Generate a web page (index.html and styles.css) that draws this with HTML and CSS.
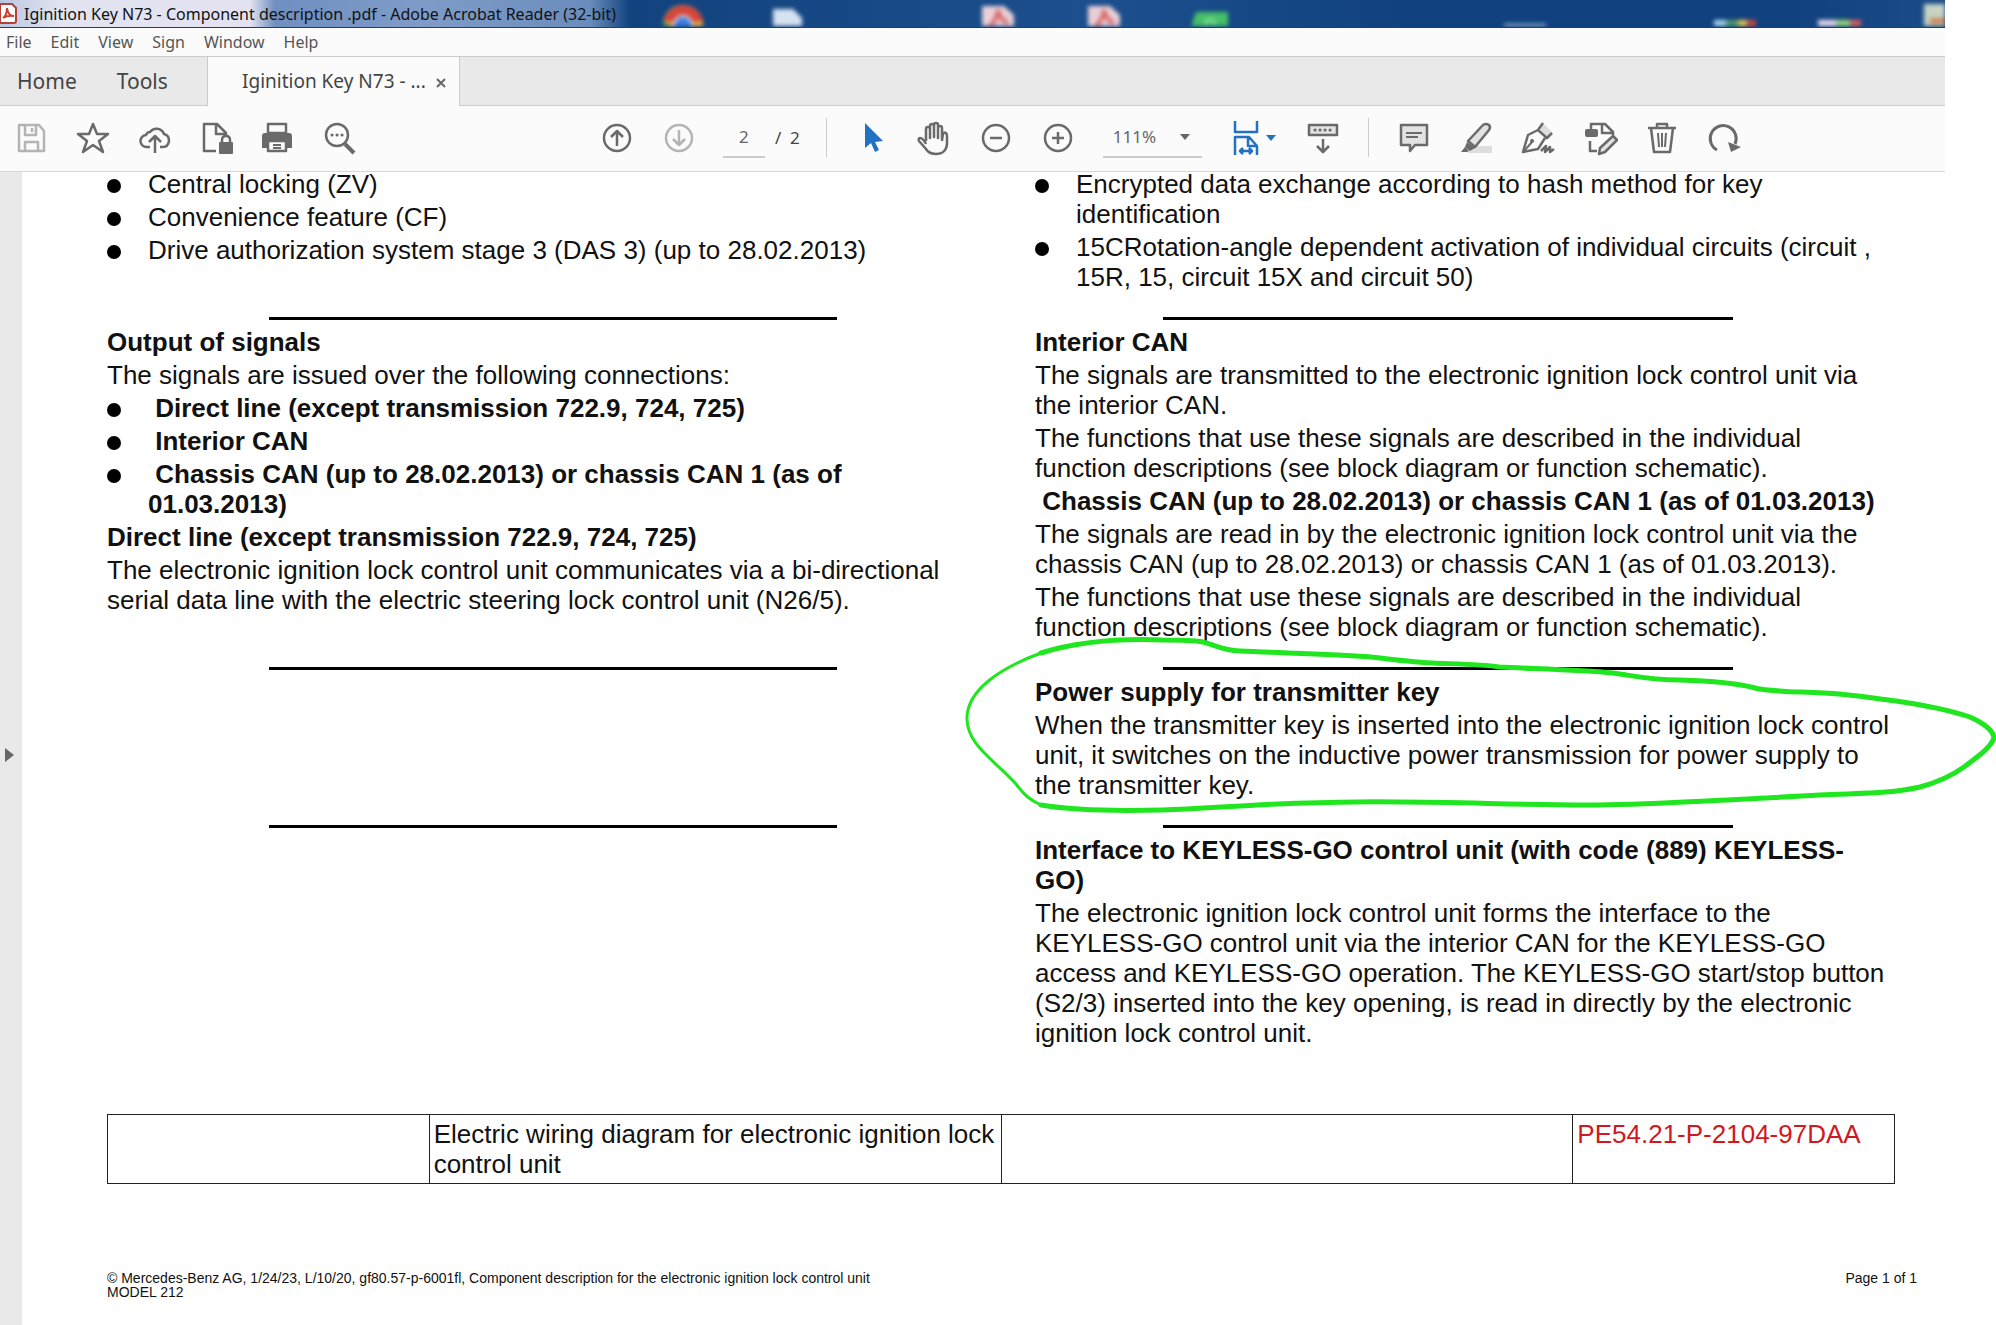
FILE: index.html
```html
<!DOCTYPE html>
<html lang="en">
<head>
    <meta charset="UTF-8">
    <meta name="viewport" content="width=device-width, initial-scale=1.0">
    <title>Iginition Key N73 - Component description .pdf</title>
    <link rel="stylesheet" href="styles.css">
</head>
<body>
    <div class="app">
        <header class="titlebar">
            <!-- Desktop icons showing through the glass -->
            <svg class="desktop" width="1945" height="26" viewBox="0 0 1945 26" aria-hidden="true">
                <circle cx="683" cy="25" r="20" fill="#e8b93c"/>
                <path d="M664 21a20 20 0 0 1 39 0l-20 3z" fill="#d8453a"/>
                <path d="M663 20l14 12h-14z" fill="#3f9c58"/>
                <circle cx="683" cy="25" r="9" fill="#3f7be0" stroke="#e4ecf6" stroke-width="2"/>
                <path d="M773 9h20l9 9v12h-29z" fill="#d5e2f0"/>
                <path d="M982 6h22l10 9v15h-32z" fill="#ead0d6"/>
                <path d="M990 26q7-6 8-16q2 10 10 13" fill="none" stroke="#d9696c" stroke-width="4"/>
                <path d="M1088 6h22l10 9v15h-32z" fill="#ead0d6"/>
                <path d="M1096 26q7-6 8-16q2 10 10 13" fill="none" stroke="#d9696c" stroke-width="4"/>
                <path d="M1196 12h32v18h-38z" fill="#46c067"/>
                <path d="M1206 28v-7q5-3 8 0v7" fill="none" stroke="#7fdc94" stroke-width="3"/>
                <rect x="1504" y="24" width="42" height="6" fill="#b9cbe2"/>
                <rect x="1714" y="20" width="12" height="8" fill="#a9d3ea"/>
                <rect x="1726" y="20" width="12" height="8" fill="#4f9a6b"/>
                <rect x="1738" y="20" width="9" height="8" fill="#e2c54e"/>
                <rect x="1747" y="20" width="9" height="8" fill="#c9493e"/>
                <rect x="1818" y="20" width="18" height="8" fill="#e9dcee"/>
                <rect x="1836" y="20" width="14" height="8" fill="#9ad47a"/>
                <rect x="1850" y="20" width="11" height="8" fill="#d8605a"/>
                <rect x="1924" y="4" width="24" height="24" fill="#c8d3c4"/>
                <rect x="1930" y="18" width="18" height="6" fill="#c98a5e"/>
            </svg>
            <svg class="app-icon" width="18" height="24" viewBox="0 0 18 24" aria-hidden="true">
                <path d="M0 2h12l4 4v13q0 2-2 2H0z" fill="#fff" stroke="#b5403a" stroke-width="2"/>
                <path d="M3 16q4-3 4-10q1 8 7 8q-6-1-11 2z" fill="none" stroke="#d03a30" stroke-width="2"/>
            </svg>
            <span class="title">Iginition Key N73 - Component description .pdf - Adobe Acrobat Reader (32-bit)</span>
        </header>

        <nav class="menubar">
            <button type="button">File</button>
            <button type="button">Edit</button>
            <button type="button">View</button>
            <button type="button">Sign</button>
            <button type="button">Window</button>
            <button type="button">Help</button>
        </nav>

        <div class="tabs">
            <div class="tabs-main">
                <button type="button">Home</button>
                <button type="button">Tools</button>
            </div>
            <div class="tab-doc">
                <button type="button" class="tab-name">Iginition Key N73 - ...</button>
                <button type="button" class="tab-close" aria-label="Close tab">
                    <svg width="10" height="10" viewBox="0 0 10 10"><path d="M1 1l8 8M9 1l-8 8" fill="none" stroke="#666" stroke-width="2"/></svg>
                </button>
            </div>
        </div>

        <div class="toolbar">
            <div class="tools">
                <button type="button" class="tool disabled" aria-label="Save">
                    <svg viewBox="0 0 36 36"><path d="M6 5h20l5 6v20H6zM12 5v10h11V5M12 31v-9h13v9"/><path d="M19 8v4"/></svg>
                </button>
                <button type="button" class="tool" aria-label="Star">
                    <svg viewBox="0 0 36 36"><path d="M18 4l4 10h11l-9 7 4 11-10-7-10 7 4-11-9-7h11z"/></svg>
                </button>
                <button type="button" class="tool" aria-label="Upload">
                    <svg viewBox="0 0 36 36"><path d="M13 27H10a6 6 0 0 1-1-12q1-3 4-3a8 8 0 0 1 14 2q5 1 5 7q-1 6-6 6h-3M18 33V17M12 22l6-6 6 6"/></svg>
                </button>
                <button type="button" class="tool" aria-label="Protect">
                    <svg viewBox="0 0 36 36"><path d="M17 31H5V4h13l9 9v4M17 4v10h10"/><rect class="fill" x="20" y="22" width="14" height="12" rx="1"/><path d="M23 23v-3q0-4 4-4t4 4v3"/></svg>
                </button>
                <button type="button" class="tool" aria-label="Print">
                    <svg viewBox="0 0 36 36"><path class="fill" d="M4 13h24q3 0 3 3v12H1V16q0-3 3-3z"/><path class="paper" d="M7 4h18v9H7zM7 21h18v10H7z"/><path class="thin" d="M12 25h8M12 28h8"/></svg>
                </button>
                <button type="button" class="tool" aria-label="Search">
                    <svg viewBox="0 0 36 36"><circle cx="14" cy="15" r="11"/><path class="bold" d="M22 24l9 9"/><path class="dots" d="M9 15h.1M14 15h.1M19 15h.1"/></svg>
                </button>
            </div>

            <div class="tools tools-page">
                <button type="button" class="tool" aria-label="Previous page">
                    <svg viewBox="0 0 36 36"><circle cx="18" cy="18" r="13"/><path d="M18 26V11M12 17l6-6 6 6"/></svg>
                </button>
                <button type="button" class="tool disabled" aria-label="Next page">
                    <svg viewBox="0 0 36 36"><circle cx="18" cy="18" r="13"/><path d="M18 10v15M12 19l6 6 6-6"/></svg>
                </button>
                <label class="page-label"><input class="page-input" type="text" value="2" aria-label="Page number"><span class="page-total">/&nbsp; 2</span></label>
                <span class="separator"></span>
                <button type="button" class="tool blue" aria-label="Select">
                    <svg viewBox="0 0 36 36"><path class="fill" d="M11 3l18 18-8 1 4 8-4 2-4-9-6 5z"/></svg>
                </button>
                <button type="button" class="tool" aria-label="Hand">
                    <svg viewBox="0 0 36 36"><path d="M10 21V9q0-2 2-2t2 2v9V6q0-2 2-2t2 2v11V5q0-2 2-2t2 2v13V8q0-2 2-2t2 2v12l1-6q1-2 3-1 1 1 1 3v8q-1 10-11 10-7 0-10-5L3 21q-1-3 1-3 3 0 6 6"/></svg>
                </button>
                <button type="button" class="tool" aria-label="Zoom out">
                    <svg viewBox="0 0 36 36"><circle cx="18" cy="18" r="13"/><path d="M12 18h12"/></svg>
                </button>
                <button type="button" class="tool" aria-label="Zoom in">
                    <svg viewBox="0 0 36 36"><circle cx="18" cy="18" r="13"/><path d="M12 18h12M18 12v12"/></svg>
                </button>
                <div class="zoom">
                    <select aria-label="Zoom level"><option>111%</option></select>
                    <svg width="10" height="6" viewBox="0 0 10 6" aria-hidden="true"><path d="M0 0h10L5 6z" fill="#666"/></svg>
                </div>
                <button type="button" class="tool tool-fit blue" aria-label="Fit width">
                    <svg viewBox="0 0 36 36"><path d="M7 1v11h22V1M7 35V17h14l8 9v9M20 17v9h9M12 31h12M15 28l-3 3 3 3M21 28l3 3-3 3"/></svg>
                    <svg class="caret" viewBox="0 0 10 6"><path class="fill" d="M0 0h10L5 6z"/></svg>
                </button>
                <button type="button" class="tool" aria-label="Read mode">
                    <svg viewBox="0 0 36 36"><rect class="tint" x="4" y="5" width="28" height="10"/><path class="dots" d="M10 10h.1M15 10h.1M20 10h.1M25 10h.1"/><path d="M18 19v13M12 26l6 6 6-6"/></svg>
                </button>
                <span class="separator separator-edit"></span>
                <button type="button" class="tool" aria-label="Comment">
                    <svg viewBox="0 0 36 36"><path class="tint" d="M5 5h26v20H19l-5 6v-6H5z"/><path class="thin" d="M10 13h16M10 17h12"/></svg>
                </button>
                <button type="button" class="tool" aria-label="Highlight">
                    <svg viewBox="0 0 36 36"><path class="shade" d="M10 26h24v7H10z"/><path class="tint" d="M10 21L25 5q3-2 6 0 2 2 0 5L17 27z"/><path class="fill" d="M9 22l8 6-5 3-5-4zM3 32l4-5 4 4-2 1z"/></svg>
                </button>
                <button type="button" class="tool" aria-label="Sign">
                    <svg viewBox="0 0 36 36"><path class="shade" d="M20 9l4-5 8 8-4 5z"/><path d="M23 3l-5 7 9 8 5-5M18 10l-10 5-5 17 15-3 7-11"/><path class="thin" d="M4 31l8-9"/><path class="fill" d="M12 19a2 2 0 1 0 .1 0z"/><path d="M21 31l5-5-1 6 5-5v5l4-3"/></svg>
                </button>
                <button type="button" class="tool" aria-label="Edit page">
                    <svg viewBox="0 0 36 36"><path d="M9 9V4h14l8 8v3M20 4v9h10M8 21v10h7"/><rect class="fill" x="3" y="9" width="13" height="8" rx="2"/><path class="tint" d="M18 28L31 16l4 4-12 12-6 2z"/></svg>
                </button>
                <button type="button" class="tool" aria-label="Delete">
                    <svg viewBox="0 0 36 36"><path d="M4 8h28M13 8V4h10v4M7 8l3 24h16l3-24"/><path class="thin" d="M14 13l1 14M18 13v14M22 13l-1 14"/></svg>
                </button>
                <button type="button" class="tool" aria-label="Rotate">
                    <svg viewBox="0 0 36 36"><path class="thick" d="M11 30A13 13 0 1 1 29 24"/><path class="fill" d="M22 22l13 5-10 5z"/></svg>
                </button>
            </div>
        </div>

        <main class="viewer">
            <aside class="sidebar">
                <button type="button" aria-label="Show navigation pane">
                    <svg width="9" height="14" viewBox="0 0 9 14"><path d="M0 0l9 7-9 7z" fill="#666"/></svg>
                </button>
            </aside>

            <article class="page">
                <div class="columns">
                    <section class="cell">
                        <ul>
                            <li>Central locking (ZV)</li>
                            <li>Convenience feature (CF)</li>
                            <li>Drive authorization system stage 3 (DAS 3) (up to 28.02.2013)</li>
                        </ul>
                    </section>
                    <section class="cell">
                        <ul>
                            <li>Encrypted data exchange according to hash method for key<br>identification</li>
                            <li>15CRotation-angle dependent activation of individual circuits (circuit ,<br>15R, 15, circuit 15X and circuit 50)</li>
                        </ul>
                    </section>

                    <section class="cell ruled">
                        <h2>Output of signals</h2>
                        <p>The signals are issued over the following connections:</p>
                        <ul class="strong">
                            <li>&nbsp;Direct line (except transmission 722.9, 724, 725)</li>
                            <li>&nbsp;Interior CAN</li>
                            <li>&nbsp;Chassis CAN (up to 28.02.2013) or chassis CAN 1 (as of<br>01.03.2013)</li>
                        </ul>
                        <h2>Direct line (except transmission 722.9, 724, 725)</h2>
                        <p>The electronic ignition lock control unit communicates via a bi-directional<br>serial data line with the electric steering lock control unit (N26/5).</p>
                    </section>
                    <section class="cell ruled">
                        <h2>Interior CAN</h2>
                        <p>The signals are transmitted to the electronic ignition lock control unit via<br>the interior CAN.</p>
                        <p>The functions that use these signals are described in the individual<br>function descriptions (see block diagram or function schematic).</p>
                        <h2>&nbsp;Chassis CAN (up to 28.02.2013) or chassis CAN 1 (as of 01.03.2013)</h2>
                        <p>The signals are read in by the electronic ignition lock control unit via the<br>chassis CAN (up to 28.02.2013) or chassis CAN 1 (as of 01.03.2013).</p>
                        <p>The functions that use these signals are described in the individual<br>function descriptions (see block diagram or function schematic).</p>
                    </section>

                    <section class="cell ruled"></section>
                    <section class="cell ruled marked">
                        <h2>Power supply for transmitter key</h2>
                        <p>When the transmitter key is inserted into the electronic ignition lock control<br>unit, it switches on the inductive power transmission for power supply to<br>the transmitter key.</p>
                        <!-- Hand-drawn loop around this section -->
                        <svg class="loop" viewBox="960 636 1036 180" preserveAspectRatio="none" aria-hidden="true">
                            <path class="pen-thin" d="M1041 805C1030 800 1024 795 1016 784C995 760 966 745 967 717C968 690 1000 668 1041 653"/>
                            <path class="pen" d="M1041 653C1070 644 1110 638 1162 640C1180 640 1192 640 1203 642C1218 646 1222 650 1240 651C1280 653 1330 654 1371 657C1395 660 1410 662 1432 663C1455 664 1480 664 1499 667C1540 669 1580 670 1613 673C1635 676 1650 680 1680 680C1720 681 1740 684 1755 688C1775 693 1810 691 1839 694C1870 697 1880 699 1896 701C1930 706 1955 712 1970 717C1985 724 1993 730 1994 738C1990 748 1980 755 1964 767C1950 777 1935 783 1920 787C1890 794 1860 793 1820 795C1780 797 1755 799 1728 800C1680 802 1640 805 1587 805C1520 805 1460 802 1398 802C1350 801 1310 803 1277 804C1230 806 1200 809 1162 810C1120 811 1070 810 1041 805"/>
                        </svg>
                    </section>

                    <section class="cell ruled"></section>
                    <section class="cell ruled">
                        <h2>Interface to KEYLESS-GO control unit (with code (889) KEYLESS-<br>GO)</h2>
                        <p>The electronic ignition lock control unit forms the interface to the<br>KEYLESS-GO control unit via the interior CAN for the KEYLESS-GO<br>access and KEYLESS-GO operation. The KEYLESS-GO start/stop button<br>(S2/3) inserted into the key opening, is read in directly by the electronic<br>ignition lock control unit.</p>
                    </section>
                </div>

                <table class="refs">
                    <tr>
                        <td class="narrow"></td>
                        <td>Electric wiring diagram for electronic ignition lock<br>control unit</td>
                        <td></td>
                        <td class="narrow"><a href="#">PE54.21-P-2104-97DAA</a></td>
                    </tr>
                </table>

                <footer class="page-footer">
                    <p>© Mercedes-Benz AG, 1/24/23, L/10/20, gf80.57-p-6001fl, Component description for the electronic ignition lock control unit<br>MODEL 212</p>
                    <p>Page 1 of 1</p>
                </footer>
            </article>
        </main>
    </div>
</body>
</html>
```
FILE: styles.css
```css
:root {
    --chrome: #fbfbfb;
    --strip: #e9e9e9;
    --line: #cccccc;
    --icon: #6a6a6a;
    --blue: #2272c3;
}

* {
    box-sizing: border-box;
}

body {
    margin: 0;
    padding-right: 51px;
    background: #fff;
    font-family: "Noto Sans", "Open Sans", sans-serif;
    color: #444;
}

.app {
    display: flex;
    flex-direction: column;
    min-height: 100vh;
}

button,
input,
select {
    margin: 0;
    padding: 0;
    border: none;
    background: none;
    font: inherit;
    color: inherit;
}

h2,
p,
ul {
    margin: 0;
    padding: 0;
}

/* Title bar */
.titlebar {
    position: relative;
    display: flex;
    align-items: center;
    gap: 6px;
    height: 28px;
    overflow: hidden;
    background: linear-gradient(90deg, #b9c6e0 0, #e2e4f2 60px, #e4e2f0 250px, #6f8fc0 275px, #7f9cc8 420px, #6a8cbc 590px, #12437f 630px, #1c4f8d 1100px, #11427f 1400px, #11427f 1800px, #1d4d88 100%);
    border-bottom: 1px solid #1b3f6e;
    color: #111;
}

.desktop {
    position: absolute;
    left: 0;
    top: 0;
    filter: blur(2px);
}

.app-icon,
.title {
    position: relative;
}

.title {
    font-size: 16px;
    line-height: 26px;
    white-space: nowrap;
}

/* Menu */
.menubar {
    display: flex;
    gap: 19px;
    height: 29px;
    padding-left: 6px;
    background: var(--chrome);
    border-bottom: 1px solid var(--line);
    font-size: 16px;
    color: #555;
}

/* Tabs */
.tabs {
    display: flex;
    height: 49px;
    background: var(--strip);
    box-shadow: inset 0 -1px var(--line);
}

.tabs-main {
    display: flex;
    gap: 40px;
    width: 207px;
    padding: 0 0 2px 17px;
    font-size: 21px;
}

.tab-doc {
    display: flex;
    align-items: center;
    justify-content: space-between;
    width: 253px;
    padding: 0 13px 2px 34px;
    background: var(--chrome);
    border-left: 1px solid var(--line);
    border-right: 1px solid var(--line);
    font-size: 19px;
    white-space: nowrap;
}

/* Toolbar */
.toolbar {
    display: flex;
    height: 66px;
    padding-bottom: 2px;
    background: var(--chrome);
    border-bottom: 1px solid #d6d6d6;
}

.tools {
    display: flex;
    align-items: center;
}

.tools-page {
    margin-left: 11%;
}

.tool {
    display: flex;
    align-items: center;
    justify-content: center;
    width: 62px;
    height: 48px;
    color: var(--icon);
}

.tool svg {
    flex: none;
    width: 36px;
    height: 36px;
    fill: none;
    stroke: currentColor;
    stroke-width: 2.5;
    stroke-linejoin: round;
}

.tool .fill {
    fill: currentColor;
    stroke: none;
}

.tool .paper {
    fill: var(--chrome);
}

.tool .tint {
    fill: #e2e2e2;
}

.tool .shade {
    fill: #dedede;
    stroke: none;
}

.tool .thin {
    stroke-width: 2;
}

.tool .thick {
    stroke-width: 3;
}

.tool .bold {
    stroke-width: 4;
}

.tool .dots {
    stroke-width: 3;
    stroke-linecap: round;
}

.disabled {
    color: #b4b4b4;
}

.blue {
    color: var(--blue);
}

.page-label {
    display: flex;
    align-items: center;
    gap: 10px;
    margin: 0 26px 0 13px;
    font-size: 17px;
}

.page-input {
    width: 42px;
    height: 40px;
    border-bottom: 2px solid var(--line);
    color: #666;
    text-align: center;
}

.separator {
    width: 1px;
    height: 39px;
    margin-right: 14px;
    background: var(--line);
}

.separator-edit {
    margin-left: 14px;
}

.zoom {
    display: flex;
    align-items: center;
    width: 99px;
    height: 40px;
    margin: 0 26px 0 14px;
    padding: 0 12px 0 10px;
    border-bottom: 2px solid var(--line);
    font-size: 17px;
    color: #666;
}

.zoom select {
    flex: 1;
    appearance: none;
}

.tool-fit {
    gap: 2px;
    width: 48px;
    margin-right: 16px;
}

.tool .caret {
    width: 10px;
    height: 6px;
}

/* Document */
.viewer {
    display: flex;
    flex: 1;
}

.sidebar {
    display: flex;
    flex: none;
    width: 22px;
    padding: 576px 0 0 5px;
    background: var(--strip);
}

.sidebar button {
    height: 14px;
    line-height: 0;
}

/* Page is scrolled slightly past its first line */
.page {
    flex: 1;
    margin-top: -3px;
    padding: 0 50px 0 85px;
    font-family: "Liberation Sans", Arial, sans-serif;
    font-size: 26px;
    line-height: 30px;
    color: #111;
    white-space: nowrap;
}

.columns {
    display: grid;
    grid-template-columns: 1fr 1fr;
}

.cell {
    display: flex;
    flex-direction: column;
    gap: 3px;
    padding-bottom: 25px;
}

.cell:nth-child(even) {
    padding-left: 34px;
}

.ruled::before {
    content: "";
    width: 568px;
    height: 3px;
    margin: 0 auto 4px 162px;
    background: #000;
}

.cell:nth-child(even).ruled::before {
    width: 570px;
    margin-left: 128px;
}

.cell h2 {
    font-size: inherit;
    font-weight: bold;
}

.cell ul {
    display: flex;
    flex-direction: column;
    gap: 3px;
    list-style: none;
}

.cell li {
    position: relative;
    padding-left: 41px;
}

.cell li::before {
    content: "";
    position: absolute;
    left: 0;
    top: 10px;
    width: 14px;
    height: 14px;
    border-radius: 50%;
    background: #000;
}

.strong {
    font-weight: bold;
}

.marked {
    position: relative;
}

.loop {
    position: absolute;
    left: -41px;
    top: -31px;
    width: calc(100% + 142px);
    height: 180px;
    fill: none;
    stroke: #1fe61f;
    stroke-linecap: round;
}

.pen {
    stroke-width: 5;
}

.pen-thin {
    stroke-width: 3;
}

.refs {
    width: 100%;
    margin-top: 41px;
    border-collapse: collapse;
    table-layout: fixed;
}

.refs td {
    height: 69px;
    padding: 4px;
    border: 1px solid #222;
    vertical-align: top;
}

.refs .narrow {
    width: 18%;
}

.refs a {
    color: #d01820;
    text-decoration: none;
}

.page-footer {
    display: flex;
    justify-content: space-between;
    margin: 87px -22px 0 0;
    font-size: 14px;
    line-height: 14px;
}
```
